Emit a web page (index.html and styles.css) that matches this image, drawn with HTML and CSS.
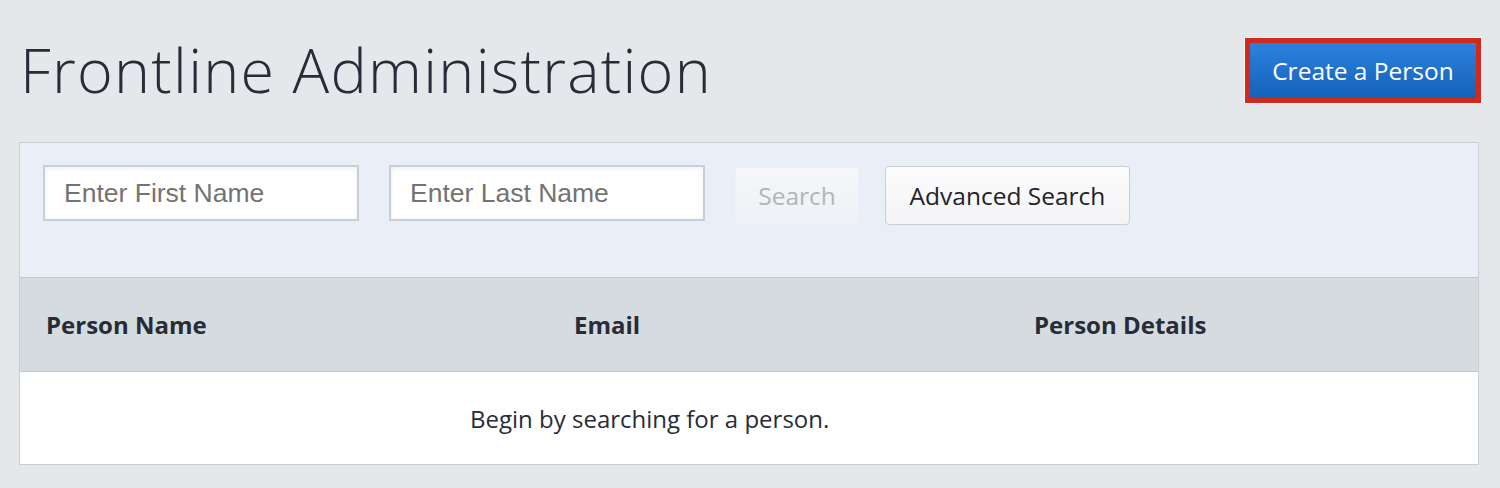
FILE: index.html
```
<!DOCTYPE html>
<html lang="en">
<head>
  <meta charset="UTF-8" />
  <meta name="viewport" content="width=device-width, initial-scale=1.0"/>
  <title>Frontline Administration</title>
  <link rel="stylesheet" href="styles.css">
</head>
<body>
  <div class="page-header">
    <h1>Frontline Administration</h1>
    <button class="btn-primary">Create a Person</button>
  </div>

  <div class="panel">
    <div class="search-bar">
      <input type="text" class="search-input" placeholder="Enter First Name">
      <input type="text" class="search-input" placeholder="Enter Last Name">
      <button class="btn btn-search" disabled>Search</button>
      <button class="btn btn-advanced">Advanced Search</button>
    </div>

    <div class="results">
      <div class="results-head">
        <div class="col">Person Name</div>
        <div class="col">Email</div>
        <div class="col">Person Details</div>
      </div>
      <div class="results-empty">Begin by searching for a person.</div>
    </div>
  </div>
</body>
</html>
```

FILE: styles.css
```
:root {
  --page-bg: #e5e8eb;
  --search-bg: #eaeff7;
  --head-bg: #d6dbdf;
  --text: #272c37;
  --border: #c9ced3;
  --blue-top: #2b82dc;
  --blue-bottom: #1561b9;
}

body {
  margin: 0;
  padding: 34px 19px 0 19px;
  background: var(--page-bg);
  color: var(--text);
  font-family: 'Open Sans', sans-serif;
}

.page-header {
  display: flex;
  justify-content: space-between;
  align-items: flex-start;
}

h1 {
  margin: 0 0 0 1px;
  font-size: 61px;
  font-weight: 300;
  letter-spacing: 1.3px;
  line-height: 72px;
  color: var(--text);
}

.btn-primary {
  margin-top: 4px;
  width: 236px;
  height: 65px;
  padding: 0;
  border: 5px solid #d02a1f;
  box-shadow: 0 0 0 1px #f4f6f8;
  background: linear-gradient(to bottom, var(--blue-top), var(--blue-bottom));
  color: #fff;
  font-family: 'Open Sans', sans-serif;
  font-size: 24.5px;
  cursor: pointer;
}

.panel {
  margin-top: 36px;
  width: 1458px;
  border: 1px solid var(--border);
  background: #fff;
}

.search-bar {
  display: flex;
  align-items: flex-start;
  padding: 22px 23px 52px 23px;
  background: var(--search-bg);
  border-bottom: 1px solid #bfc8d1;
}

.search-input {
  box-sizing: border-box;
  width: 316px;
  height: 56px;
  margin-right: 30px;
  padding: 0 19px;
  border: 2px solid #c7d0d9;
  box-shadow: inset 0 1px 4px rgba(0, 0, 0, 0.08);
  background: #fff;
  font-family: 'Liberation Sans', Arial, sans-serif;
  font-size: 26.5px;
  color: #333;
}

.search-input::placeholder {
  color: #737373;
}

.btn {
  box-sizing: border-box;
  border-radius: 4px;
  font-family: 'Open Sans', sans-serif;
  font-size: 24.5px;
  padding: 0;
}

.btn-search {
  width: 124px;
  height: 57px;
  margin-top: 2px;
  margin-right: 26px;
  border: 1px solid #eef1f5;
  background: linear-gradient(to bottom, #f5f7fa, #eef1f5);
  color: #b2b5b9;
}

.btn-advanced {
  width: 245px;
  height: 59px;
  margin-top: 1px;
  border: 1px solid #c9ced3;
  background: linear-gradient(to bottom, #fcfcfd, #f3f4f6);
  color: #1f2228;
  cursor: pointer;
}

.results-head {
  display: grid;
  grid-template-columns: 528px 460px 1fr;
  align-items: center;
  height: 93px;
  background: var(--head-bg);
  border-bottom: 1px solid #bfc8d1;
  font-size: 24px;
  font-weight: 700;
}

.results-head .col {
  padding-left: 26px;
}

.results-empty {
  height: 92px;
  display: flex;
  align-items: center;
  padding-left: 450px;
  font-size: 24px;
}
```
